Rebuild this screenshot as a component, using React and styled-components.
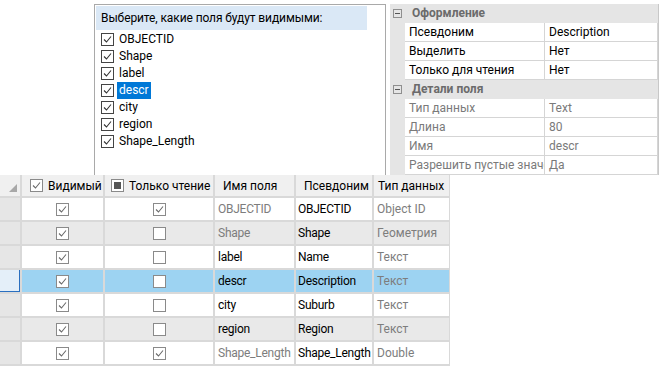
import React from "react";
import styled, { createGlobalStyle } from "styled-components";

const GlobalStyle = createGlobalStyle`
  html, body { margin: 0; padding: 0; background: #ffffff; }
  body { font-family: Roboto, "Noto Sans", sans-serif; font-size: 12px; color: #000; }
  * { box-sizing: border-box; }
`;

const Canvas = styled.div`
  width: 662px;
  height: 366px;
  overflow: hidden;
  background: #fff;
  display: flex;
  flex-direction: column;
`;

const TopRow = styled.div`
  display: flex;
  align-items: flex-start;
  height: 175px;
  padding-top: 4px;
  padding-left: 94px;
`;

const FieldList = styled.div`
  width: 292px;
  height: 175px;
  border: 1px solid #a9a9a9;
  border-bottom: none;
  padding: 1px;
  display: flex;
  flex-direction: column;
`;

const ListCaption = styled.div`
  background: #dae8f6;
  height: 24px;
  width: 271px;
  line-height: 24px;
  padding-left: 5px;
  white-space: nowrap;
  letter-spacing: -0.1px;
`;

const ListItems = styled.div`
  display: flex;
  flex-direction: column;
  padding: 1px 0 0 5px;
`;

const ListItem = styled.div`
  display: flex;
  align-items: center;
  height: 17px;
  gap: 3px;
`;

const ItemLabel = styled.span`
  padding: 0 2px;
  line-height: 17px;
  background: ${(p) => (p.$selected ? "#0078d7" : "transparent")};
  color: ${(p) => (p.$selected ? "#fff" : "#000")};
`;

const Box = styled.span`
  width: 13px;
  height: 13px;
  flex: none;
  display: inline-flex;
  align-items: center;
  justify-content: center;
  border: 1px solid ${(p) => p.$border || "#333"};
  background: #fff;
`;

const Fill = styled.span`
  width: 7px;
  height: 7px;
  background: #555;
`;

function Check({ checked, border = "#333", mark = "#333", fill }) {
  return (
    <Box $border={border}>
      {checked && (
        <svg width="11" height="11" viewBox="0 0 11 11">
          <path d="M2 5.5 L4.5 8 L9 2.5" fill="none" stroke={mark} strokeWidth="1.1" />
        </svg>
      )}
      {fill && <Fill />}
    </Box>
  );
}

/* Property grid */
const PropGrid = styled.div`
  margin-left: 4px;
  width: 269px;
  height: 171px;
  border-right: 1px solid #c8c8c8;
  border-bottom: 1px solid #c8c8c8;
  background: #e5e5e5;
  display: grid;
  grid-template-columns: 15px 140px 1fr;
  grid-auto-rows: 19px;
`;

const Gutter = styled.div`
  background: #e5e5e5;
  display: flex;
  align-items: center;
  justify-content: center;
`;

const Minus = styled.span`
  width: 9px;
  height: 9px;
  border: 1px solid #8f8f8f;
  display: flex;
  align-items: center;
  justify-content: center;
  &::after {
    content: "";
    width: 5px;
    height: 1px;
    background: #555;
  }
`;

const CategoryTitle = styled.div`
  grid-column: 2 / 4;
  background: #e5e5e5;
  font-weight: bold;
  color: #6b6b6b;
  line-height: 19px;
  padding-left: 7px;
`;

const PropCell = styled.div`
  background: #fff;
  border-bottom: 1px solid #d5d5d5;
  border-right: 1px solid #d5d5d5;
  line-height: 18px;
  padding-left: 4px;
  white-space: nowrap;
  overflow: hidden;
  color: ${(p) => (p.$dim ? "#7a7a7a" : "#000")};
`;

/* Data grid */
const DataGrid = styled.div`
  width: 450px;
  display: grid;
  grid-template-columns: 20px 81px 108px 79px 76px 75px;
  grid-template-rows: 21px;
  grid-auto-rows: 22px;
  gap: 2px;
  background: #d9d9d9;
  padding-bottom: 2px;
`;

const HeadCell = styled.div`
  background: #f0f0f0;
  display: flex;
  align-items: center;
  gap: 5px;
  padding-left: ${(p) => (p.$pad || 0)}px;
  white-space: nowrap;
  overflow: hidden;
  position: relative;
`;

const Corner = styled.svg`
  position: absolute;
  right: 3px;
  bottom: 4px;
`;

const RowHead = styled.div`
  background: ${(p) => (p.$sel ? "#e4eff9" : "#e6e6e6")};
  border-right: ${(p) => (p.$sel ? "1px solid #2a6fc0" : "none")};
  border-bottom: ${(p) => (p.$sel ? "1px solid #2a6fc0" : "none")};
`;

const rowBg = (p) => (p.$sel ? "#9dd3f2" : p.$alt ? "#e9e9e9" : "#ffffff");

const CheckCell = styled.div`
  background: ${rowBg};
  display: flex;
  align-items: center;
  justify-content: center;
`;

const TextCell = styled.div`
  background: ${rowBg};
  display: flex;
  align-items: center;
  padding-left: ${(p) => (p.$pad ?? 4)}px;
  white-space: nowrap;
  overflow: hidden;
  letter-spacing: ${(p) => (p.$tight ? "-0.25px" : "0")};
  color: ${(p) => (p.$dim ? "#7d7d7d" : "#000")};
`;

const listFields = ["OBJECTID", "Shape", "label", "descr", "city", "region", "Shape_Length"];

const rows = [
  { name: "OBJECTID", alias: "OBJECTID", type: "Object ID", ro: true, nameDim: true },
  { name: "Shape", alias: "Shape", type: "Геометрия", ro: false, nameDim: true },
  { name: "label", alias: "Name", type: "Текст", ro: false },
  { name: "descr", alias: "Description", type: "Текст", ro: false, sel: true },
  { name: "city", alias: "Suburb", type: "Текст", ro: false },
  { name: "region", alias: "Region", type: "Текст", ro: false },
  { name: "Shape_Length", alias: "Shape_Length", type: "Double", ro: true, nameDim: true },
];

const props1 = [
  ["Псевдоним", "Description"],
  ["Выделить", "Нет"],
  ["Только для чтения", "Нет"],
];
const props2 = [
  ["Тип данных", "Text"],
  ["Длина", "80"],
  ["Имя", "descr"],
  ["Разрешить пустые значе", "Да"],
];

export default function App() {
  return (
    <>
      <GlobalStyle />
      <Canvas>
        <TopRow>
          <FieldList>
            <ListCaption>Выберите, какие поля будут видимыми:</ListCaption>
            <ListItems>
              {listFields.map((f) => (
                <ListItem key={f}>
                  <Check checked border="#444" mark="#333" />
                  <ItemLabel $selected={f === "descr"}>{f}</ItemLabel>
                </ListItem>
              ))}
            </ListItems>
          </FieldList>
          <PropGrid>
            <Gutter><Minus /></Gutter>
            <CategoryTitle>Оформление</CategoryTitle>
            {props1.map(([k, v]) => (
              <React.Fragment key={k}>
                <Gutter />
                <PropCell>{k}</PropCell>
                <PropCell>{v}</PropCell>
              </React.Fragment>
            ))}
            <Gutter><Minus /></Gutter>
            <CategoryTitle>Детали поля</CategoryTitle>
            {props2.map(([k, v]) => (
              <React.Fragment key={k}>
                <Gutter />
                <PropCell $dim>{k}</PropCell>
                <PropCell $dim>{v}</PropCell>
              </React.Fragment>
            ))}
          </PropGrid>
        </TopRow>
        <DataGrid>
          <HeadCell>
            <Corner width="8" height="8" viewBox="0 0 8 8">
              <polygon points="8,0 8,8 0,8" fill="#a8a8a8" />
            </Corner>
          </HeadCell>
          <HeadCell $pad={8}>
            <Check checked border="#8a8a8a" mark="#6a6a6a" />
            Видимый
          </HeadCell>
          <HeadCell $pad={6}>
            <Check fill border="#8a8a8a" />
            Только чтение
          </HeadCell>
          <HeadCell $pad={8}>Имя поля</HeadCell>
          <HeadCell $pad={8}>Псевдоним</HeadCell>
          <HeadCell $pad={4}>Тип данных</HeadCell>
          {rows.map((r, i) => (
            <React.Fragment key={r.name}>
              <RowHead $sel={r.sel} />
              <CheckCell $alt={i % 2 === 1} $sel={r.sel}>
                <Check checked border="#8a8a8a" mark="#6a6a6a" />
              </CheckCell>
              <CheckCell $alt={i % 2 === 1} $sel={r.sel}>
                <Check checked={r.ro} border="#8a8a8a" mark="#6a6a6a" />
              </CheckCell>
              <TextCell $alt={i % 2 === 1} $sel={r.sel} $dim={r.nameDim} $pad={3} $tight>{r.name}</TextCell>
              <TextCell $alt={i % 2 === 1} $sel={r.sel} $pad={2} $tight>{r.alias}</TextCell>
              <TextCell $alt={i % 2 === 1} $sel={r.sel} $dim $pad={3}>{r.type}</TextCell>
            </React.Fragment>
          ))}
        </DataGrid>
      </Canvas>
    </>
  );
}
